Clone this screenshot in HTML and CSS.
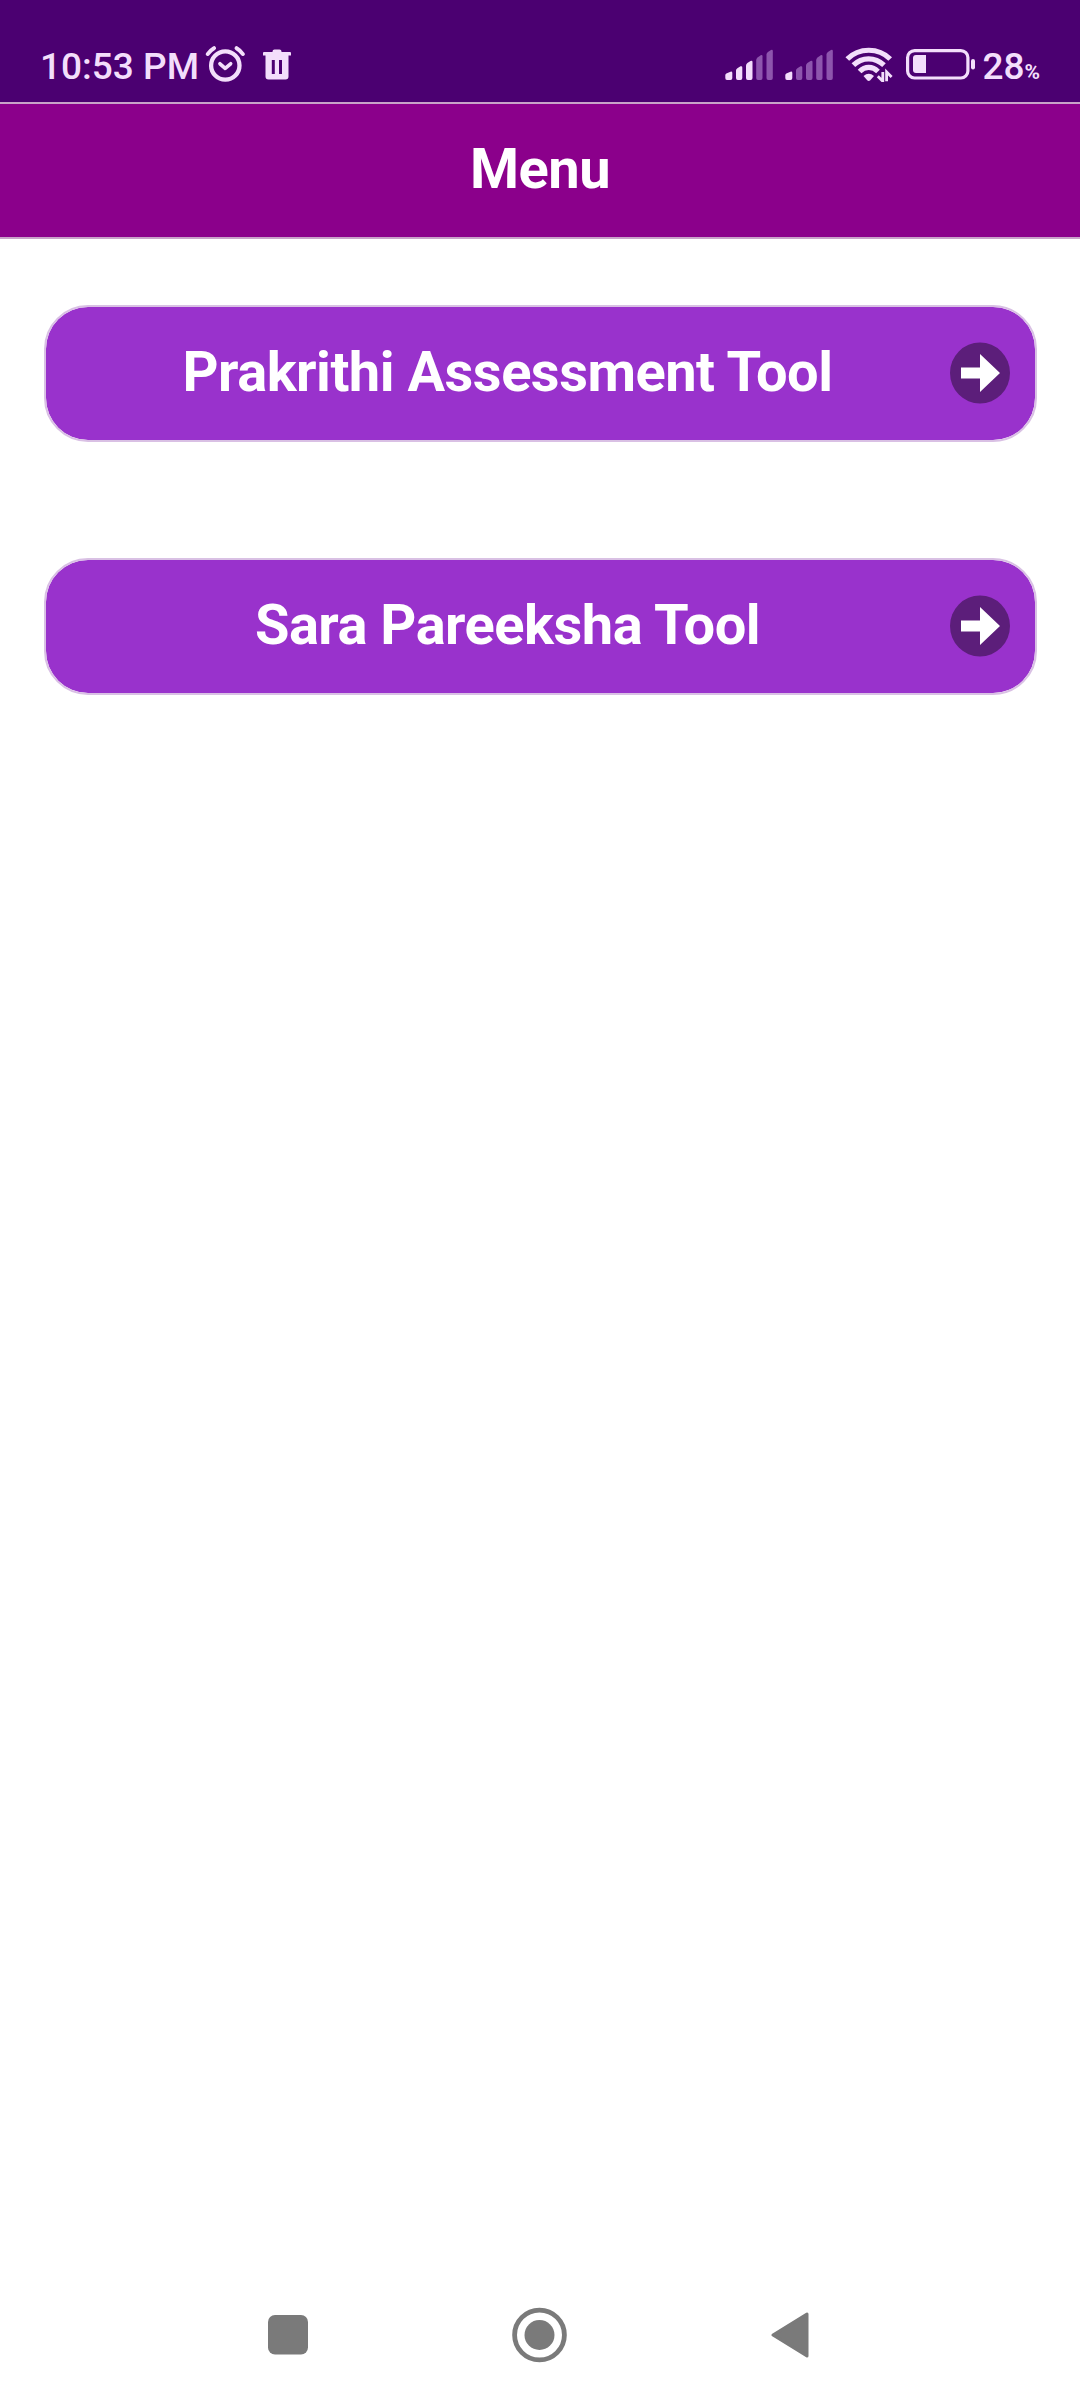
FILE: index.html
```html
<!DOCTYPE html>
<html lang="en">
<head>
    <meta charset="UTF-8">
    <meta name="viewport" content="width=device-width, initial-scale=1.0">
    <title>Menu</title>
    <link rel="stylesheet" href="styles.css">
</head>
<body>
    <div class="status-bar">
        <span class="time">10:53 PM</span>
        <svg class="alarm" width="40" height="38" viewBox="0 0 40 38" fill="none" stroke="#f3defb" stroke-linecap="round">
            <circle cx="20.3" cy="20.5" r="14.2" stroke-width="4.3"/>
            <path d="M2.800 9Q5 5.500 9 3.200M37.800 9Q35.500 5.500 31.600 3.200" stroke-width="4"/>
            <path d="M15 18.800l5.200 4.500 5.400-4.500" stroke-width="3.7" stroke-linejoin="round"/>
        </svg>
        <svg class="trash" width="28" height="31" viewBox="0 0 28 31">
            <path d="M9.5 2.5Q9.5 .5 11.5 .5H16.5Q18.5 .5 18.5 2.5V3H27Q28 3 28 4V6.5H25.5V27.5Q25.5 30.5 22.5 30.5H5.5Q2.5 30.5 2.5 27.5V6.5H0V4Q0 3 1 3H9.5ZM8.800 11V25H11.800V11ZM16 11V25H19V11Z" fill="#f3defb" fill-rule="evenodd"/>
        </svg>
        <div class="status-right">
            <svg class="signal" width="48" height="31" viewBox="0 0 48 31" fill="#f3defb">
                <path d="M.3 26Q.3 25 1.3 24.5L5.5 22.7Q7.3 22.3 7.3 24V29Q7.3 31 5.5 31H2Q.3 31 .3 29Z"/>
                <path d="M11 21.5Q11 20 12.4 19.2L15.5 17.3Q17.3 16.7 17.3 18.5V29Q17.3 31 15.5 31H12.8Q11 31 11 29Z"/>
                <path d="M21 16.5Q21 15 22.4 14L25.5 12Q27.5 11.2 27.5 13V29Q27.5 31 25.7 31H22.8Q21 31 21 29Z"/>
                <path class="off" d="M31.2 11Q31.2 9.5 32.6 8.5L35.7 6.3Q37.5 5.5 37.5 7.3V29Q37.5 31 35.7 31H33Q31.2 31 31.2 29Z"/>
                <path class="off" d="M41.5 5.5Q41.5 4 42.9 3L46 1Q47.8 .2 47.8 2V29Q47.8 31 46 31H43.3Q41.5 31 41.5 29Z"/>
            </svg>
            <svg class="signal" width="48" height="31" viewBox="0 0 48 31" fill="#f3defb">
                <path d="M.3 26Q.3 25 1.3 24.5L5.5 22.7Q7.3 22.3 7.3 24V29Q7.3 31 5.5 31H2Q.3 31 .3 29Z"/>
                <path class="off" d="M11 21.5Q11 20 12.4 19.2L15.5 17.3Q17.3 16.7 17.3 18.5V29Q17.3 31 15.5 31H12.8Q11 31 11 29Z"/>
                <path class="off" d="M21 16.5Q21 15 22.4 14L25.5 12Q27.5 11.2 27.5 13V29Q27.5 31 25.7 31H22.8Q21 31 21 29Z"/>
                <path class="off" d="M31.2 11Q31.2 9.5 32.6 8.5L35.7 6.3Q37.5 5.5 37.5 7.3V29Q37.5 31 35.7 31H33Q31.2 31 31.2 29Z"/>
                <path class="off" d="M41.5 5.5Q41.5 4 42.9 3L46 1Q47.8 .2 47.8 2V29Q47.8 31 46 31H43.3Q41.5 31 41.5 29Z"/>
            </svg>
            <svg class="wifi" width="48" height="36" viewBox="0 0 48 36" fill="none" stroke="#f3defb" stroke-width="5.2">
                <path d="M2.3 13C14 1.300 33.500 1.300 45.200 13"/>
                <path d="M8.400 19.200C17 10.700 30 10.700 39 19.200"/>
                <path d="M14.600 25.500C20 20 27.500 20 33 25.500"/>
                <path d="M18.500 30Q23.700 25.600 29 30L25.300 34.200Q23.700 35.600 22.200 34.200Z" fill="#f3defb" stroke="none"/>
                <path d="M37.800 26v9.300l-5-5M41.600 35.300v-9.300l5 5" stroke-width="2.8"/>
            </svg>
            <svg class="battery" width="70" height="31" viewBox="0 0 70 31">
                <rect x="1.6" y="1.6" width="60.3" height="27.4" rx="7" fill="none" stroke="#f3defb" stroke-width="3.2"/>
                <path d="M10 6H20V24H10Q7 24 7 21V9Q7 6 10 6Z" fill="#f3defb"/>
                <rect x="65" y="10" width="4" height="10.5" rx="2" fill="#f3defb"/>
            </svg>
            <span class="percent">28<small>%</small></span>
        </div>
    </div>

    <header class="header">
        <h1>Menu</h1>
    </header>

    <main class="menu">
        <a class="menu-item" href="#">
            <span>Prakrithi Assessment Tool</span>
            <svg width="60" height="62" viewBox="0 0 60 62">
                <ellipse cx="30" cy="31" rx="30" ry="30.5" fill="#5c1e7a"/>
                <path d="M11 25.5H30V12L50 31L30 50V36.5H11Z" fill="#fff"/>
            </svg>
        </a>
        <a class="menu-item" href="#">
            <span>Sara Pareeksha Tool</span>
            <svg width="60" height="62" viewBox="0 0 60 62">
                <ellipse cx="30" cy="31" rx="30" ry="30.5" fill="#5c1e7a"/>
                <path d="M11 25.5H30V12L50 31L30 50V36.5H11Z" fill="#fff"/>
            </svg>
        </a>
    </main>

    <nav class="nav-bar">
        <svg width="40" height="40" viewBox="0 0 40 40" fill="#7a7a7a">
            <rect width="40" height="39.5" rx="7"/>
        </svg>
        <svg width="56" height="56" viewBox="0 0 56 56">
            <circle cx="27.5" cy="28" r="24.9" fill="none" stroke="#7a7a7a" stroke-width="4.8"/>
            <circle cx="27.5" cy="28" r="15" fill="#7a7a7a"/>
        </svg>
        <svg width="38" height="46" viewBox="0 0 38 46">
            <path d="M2 23L36 2V44Z" fill="#7a7a7a" stroke="#7a7a7a" stroke-width="3" stroke-linejoin="round"/>
        </svg>
    </nav>
</body>
</html>
```

FILE: styles.css
```css
* {
    box-sizing: border-box;
}

body {
    font-family: Roboto, sans-serif;
    background-color: #fff;
    margin: 0;
    height: 2400px;
    display: flex;
    flex-direction: column;
}

svg {
    display: block;
    flex-shrink: 0;
}

.status-bar {
    display: flex;
    align-items: flex-start;
    height: 102px;
    padding: 45px 40px 0;
    background-color: #4b0071;
    color: #f3defb;
    font-size: 37px;
    font-weight: 500;
    line-height: 43px;
    white-space: nowrap;
}

.time {
    width: 165px;
}

.alarm {
    margin-right: 18px;
}

.trash {
    margin-top: 4px;
}

.status-right {
    display: flex;
    margin-left: auto;
}

.signal {
    margin-top: 4px;
    margin-right: 12px;
}

.signal .off {
    fill: #8d55ad;
}

.wifi {
    margin-top: 1px;
    margin-right: 13px;
}

.battery {
    margin-top: 4px;
    margin-right: 6px;
}

.percent small {
    font-size: 21px;
    font-weight: bold;
}

.header {
    height: 137px;
    padding-bottom: 3px;
    display: flex;
    justify-content: center;
    align-items: center;
    background-color: #8b008b;
    border-top: 2px solid #c9a3c9;
    border-bottom: 2px solid #c9a3c9;
}

h1 {
    margin: 0;
    color: #fff;
    font-size: 56px;
    font-weight: bold;
    letter-spacing: -0.5px;
}

.menu {
    flex: 1;
    display: flex;
    flex-direction: column;
    gap: 116px;
    padding: 66px 43px 0 44px;
}

.menu-item {
    height: 137px;
    display: flex;
    align-items: center;
    padding: 0 25px 0 19px;
    background-color: #9932cc;
    background-clip: padding-box;
    border: 2px solid #d9c0e4;
    border-radius: 44px;
    color: #fff;
    font-size: 56px;
    font-weight: bold;
    letter-spacing: -0.5px;
    text-decoration: none;
}

.menu-item span {
    flex: 1;
    padding-bottom: 4px;
    text-align: center;
}

.menu-item svg {
    margin-bottom: 1px;
}

.nav-bar {
    display: flex;
    justify-content: space-between;
    align-items: center;
    height: 130px;
    padding: 0 271px 0 268px;
}
```
